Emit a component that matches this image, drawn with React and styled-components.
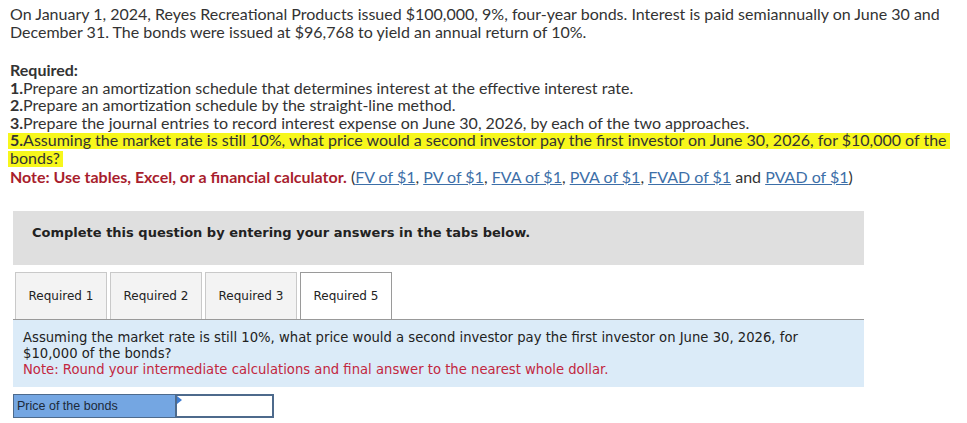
import React from "react";
import styled, { createGlobalStyle } from "styled-components";

const GlobalStyle = createGlobalStyle`
  body {
    margin: 0;
    background: #fff;
  }
`;

const Page = styled.div`
  padding: 5px 10px 0 10px;
  width: 967px;
  box-sizing: border-box;
`;

const Intro = styled.div`
  font-family: Lato, "Liberation Sans", sans-serif;
  font-size: 16px;
  line-height: 17.5px;
  color: #333;
`;

const Para = styled.p`
  margin: 0 0 ${(p) => p.$gap || 0}px 0;
`;

const Strong = styled.b`
  font-weight: 700;
  color: ${(p) => p.$color || "#333"};
`;

const Marker = styled.span`
  background: linear-gradient(transparent 3px, #f7f71c 3px);
  box-decoration-break: clone;
  -webkit-box-decoration-break: clone;
  padding: 0 3px 0 2px;
  margin-left: -2px;
`;

const NoteLine = styled.p`
  margin: 2px 0 0 0;
`;

const Link = styled.a`
  color: #3d6fa8;
  text-decoration: underline;
  cursor: pointer;
`;

const Widget = styled.div`
  margin: 25px 0 0 3px;
  width: 851px;
  font-family: "DejaVu Sans", Verdana, sans-serif;
`;

const Banner = styled.div`
  background: #dfdfdf;
  height: 54px;
  box-sizing: border-box;
  padding: 14px 19px 0 19px;
  font-size: 13px;
  line-height: 16px;
  font-weight: 700;
  color: #222;
`;

const TabBar = styled.div`
  display: flex;
  gap: 3px;
  margin: 7px 0 0 2px;
`;

const Tab = styled.div`
  width: 92px;
  height: 47px;
  box-sizing: border-box;
  display: flex;
  align-items: center;
  justify-content: center;
  font-size: 12px;
  color: #222;
  background: ${(p) => (p.$active ? "#fff" : "#f3f3f3")};
  border: 1px solid ${(p) => (p.$active ? "#9a9a9a" : "#c9c9c9")};
  border-bottom: none;
  margin-bottom: ${(p) => (p.$active ? "-1px" : "0")};
  position: relative;
  z-index: ${(p) => (p.$active ? 1 : 0)};
`;

const Panel = styled.div`
  background: #dbebf8;
  border-top: 1px solid #999;
  padding: 10px 10px 9px 10px;
  font-size: 13.2px;
  line-height: 16px;
  color: #222;
`;

const PanelNote = styled.div`
  color: #c2273f;
`;

const AnswerRow = styled.div`
  display: flex;
  margin-top: 7px;
  height: 24px;
`;

const AnswerLabel = styled.div`
  width: 162px;
  box-sizing: border-box;
  background: #74a6e2;
  border: 1px solid #4d6a8c;
  border-right: none;
  display: flex;
  align-items: center;
  padding-left: 3px;
  font-family: "Liberation Sans", Arial, sans-serif;
  font-size: 12.5px;
  color: #1c2a3a;
`;

const AnswerInput = styled.div`
  width: 99px;
  box-sizing: border-box;
  background: #fff;
  border: 2px solid #4d6a8c;
  position: relative;

  &::before {
    content: "";
    position: absolute;
    top: 0;
    left: 0;
    border-top: 4px solid transparent;
    border-bottom: 4px solid transparent;
    border-left: 5px solid #3d7bd0;
  }
`;

const links = ["FV of $1", "PV of $1", "FVA of $1", "PVA of $1"];

export default function App() {
  return (
    <Page>
      <GlobalStyle />
      <Intro>
        <Para $gap={21}>
          On January 1, 2024, Reyes Recreational Products issued $100,000, 9%, four-year bonds. Interest is paid
          semiannually on June 30 and December 31. The bonds were issued at $96,768 to yield an annual return of 10%.
        </Para>
        <Para>
          <Strong>Required:</Strong>
        </Para>
        <Para>
          <Strong>1.</Strong>Prepare an amortization schedule that determines interest at the effective interest rate.
        </Para>
        <Para>
          <Strong>2.</Strong>Prepare an amortization schedule by the straight-line method.
        </Para>
        <Para>
          <Strong>3.</Strong>Prepare the journal entries to record interest expense on June 30, 2026, by each of the two
          approaches.
        </Para>
        <Para>
          <Marker>
            <Strong>5.</Strong>Assuming the market rate is still 10%, what price would a second investor pay the first
            investor on June 30, 2026, for $10,000 of the bonds?
          </Marker>
        </Para>
        <NoteLine>
          <Strong $color="#a81d2d">Note: Use tables, Excel, or a financial calculator.</Strong> (
          {links.map((l) => (
            <React.Fragment key={l}>
              <Link>{l}</Link>,{" "}
            </React.Fragment>
          ))}
          <Link>FVAD of $1</Link> and <Link>PVAD of $1</Link>)
        </NoteLine>
      </Intro>

      <Widget>
        <Banner>Complete this question by entering your answers in the tabs below.</Banner>
        <TabBar>
          <Tab>Required 1</Tab>
          <Tab>Required 2</Tab>
          <Tab>Required 3</Tab>
          <Tab $active>Required 5</Tab>
        </TabBar>
        <Panel>
          Assuming the market rate is still 10%, what price would a second investor pay the first investor on June 30,
          2026, for <br />$10,000 of the bonds?
          <PanelNote>Note: Round your intermediate calculations and final answer to the nearest whole dollar.</PanelNote>
        </Panel>
        <AnswerRow>
          <AnswerLabel>Price of the bonds</AnswerLabel>
          <AnswerInput />
        </AnswerRow>
      </Widget>
    </Page>
  );
}
